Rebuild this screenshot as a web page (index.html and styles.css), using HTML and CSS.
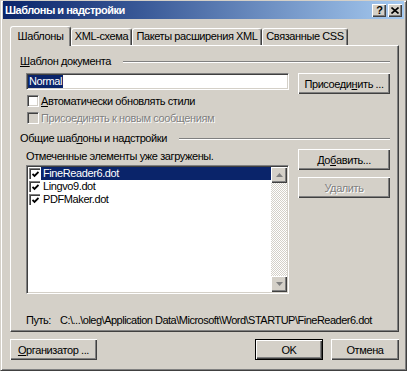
FILE: index.html
```html
<!DOCTYPE html>
<html lang="ru">
<head>
<meta charset="utf-8">
<title>Шаблоны и надстройки</title>
<link rel="stylesheet" href="styles.css">
</head>
<body>
<div class="window">
  <div class="titlebar">
    <span class="title">Шаблоны и надстройки</span>
    <div class="caption-btns">
      <span class="cbtn help">?</span>
      <span class="cbtn close"><svg width="8" height="7" viewBox="0 0 8 7"><path d="M0.5 0.5 L7.5 6.5 M7.5 0.5 L0.5 6.5" stroke="#000" stroke-width="1.6" fill="none"/></svg></span>
    </div>
  </div>
  <div class="body">
    <div class="tabs">
      <div class="tab active w1">Шаблоны</div>
      <div class="tab w2">XML-схема</div>
      <div class="tab w3">Пакеты расширения XML</div>
      <div class="tab w4">Связанные CSS</div>
    </div>
    <div class="panel">
      <div class="group-head"><span><u>Ш</u>аблон документа</span><i class="etch"></i></div>
      <div class="row1">
        <div class="field"><span class="sel">Normal</span></div>
        <div class="btn wide">Присоеди<u>н</u>ить ...</div>
      </div>
      <div class="chk first"><span class="box"></span><span class="lbl"><u>А</u>втоматически обновлять стили</span></div>
      <div class="chk second disabled"><span class="box"></span><span class="lbl">Присоединять к новым сообщениям</span></div>
      <div class="group-head g2"><span>Общие шаб<u>л</u>оны и надстройки</span><i class="etch"></i></div>
      <div class="section2">
        <div class="leftcol">
          <div class="note">Отмеченные элементы уже загружены.</div>
          <div class="listbox">
            <div class="items">
              <div class="item selected"><span class="lbox"><svg width="7" height="7" viewBox="0 0 7 7"><path d="M0.5 3 L2.5 5 L6.5 1" stroke="#000" stroke-width="1.8" fill="none"/></svg></span><span class="itext">FineReader6.dot</span></div>
              <div class="item"><span class="lbox"><svg width="7" height="7" viewBox="0 0 7 7"><path d="M0.5 3 L2.5 5 L6.5 1" stroke="#000" stroke-width="1.8" fill="none"/></svg></span><span class="itext">Lingvo9.dot</span></div>
              <div class="item"><span class="lbox"><svg width="7" height="7" viewBox="0 0 7 7"><path d="M0.5 3 L2.5 5 L6.5 1" stroke="#000" stroke-width="1.8" fill="none"/></svg></span><span class="itext">PDFMaker.dot</span></div>
            </div>
            <div class="scrollbar">
              <span class="sbtn"><svg width="7" height="4" viewBox="0 0 7 4"><path d="M3.5 0 L7 4 L0 4 Z" fill="#808080"/></svg></span>
              <span class="track"></span>
              <span class="sbtn"><svg width="7" height="4" viewBox="0 0 7 4"><path d="M0 0 L7 0 L3.5 4 Z" fill="#808080"/></svg></span>
            </div>
          </div>
        </div>
        <div class="rightcol">
          <div class="btn wide">До<u>б</u>авить...</div>
          <div class="btn wide disabled-btn">Удалить</div>
        </div>
      </div>
      <div class="path"><span class="plabel">Путь:</span><span class="pval">C:\...\oleg\Application Data\Microsoft\Word\STARTUP\FineReader6.dot</span></div>
    </div>
    <div class="footer">
      <div class="btn org"><u>О</u>рганизатор ...</div>
      <div class="btn small default">OK</div>
      <div class="btn small cancel">Отмена</div>
    </div>
  </div>
</div>
</body>
</html>
```

FILE: styles.css
```css
* { box-sizing: border-box; }
body {
  margin: 0;
  font-family: "Liberation Sans", Arial, sans-serif;
  font-size: 11px;
  letter-spacing: -0.4px;
  color: #000;
  background: #d4d0c8;
}
u { text-decoration: underline; text-underline-offset: 1px; }

.window {
  width: 407px;
  height: 371px;
  background: #d4d0c8;
  border: 1px solid;
  border-color: #d4d0c8 #404040 #404040 #d4d0c8;
  box-shadow: inset 1px 1px #fff, inset -1px -1px #808080;
  padding: 0 2px 2px 2px;
}

.titlebar {
  height: 18px;
  background: linear-gradient(90deg, #0a246a 0%, #3a5a98 35%, #a6caf0 100%);
  display: flex;
  align-items: center;
  justify-content: space-between;
  padding: 0 2px 0 2px;
  color: #fff;
}
.title {
  font-family: "Liberation Sans", Arial, sans-serif;
  font-weight: bold;
  font-size: 11px;
  letter-spacing: -0.5px;
}
.caption-btns { display: flex; gap: 2px; }
.cbtn {
  width: 14px;
  height: 13px;
  background: #d4d0c8;
  box-shadow: inset 1px 1px #fff, inset -1px -1px #404040, inset -2px -2px #808080;
  display: flex;
  align-items: center;
  justify-content: center;
  color: #000;
  font-size: 11px;
  font-weight: bold;
  line-height: 13px;
  letter-spacing: 0;
}
.cbtn.help { padding-left: 1px; padding-top: 1px; }

.body { padding: 0 3px 0 7px; }

.tabs {
  display: flex;
  align-items: flex-end;
  height: 19px;
  margin-top: 7px;
}
.tab {
  height: 17px;
  border-top: 1px solid #fff;
  border-left: 1px solid #fff;
  border-right: 1px solid #404040;
  box-shadow: inset -1px 0 #808080;
  border-radius: 3px 3px 0 0;
  background: #d4d0c8;
  text-align: center;
  line-height: 15px;
  white-space: nowrap;
}
.tab.active {
  height: 20px;
  margin-bottom: -1px;
  position: relative;
  z-index: 1;
  line-height: 18px;
}
.w1 { width: 61px; }
.w2 { width: 61px; }
.w3 { width: 130px; }
.w4 { width: 86px; }

.panel {
  width: 389px;
  height: 287px;
  border: 1px solid;
  border-color: #fff #404040 #404040 #fff;
  box-shadow: inset -1px -1px #808080;
  padding: 0 8px 0 9px;
  display: flex;
  flex-direction: column;
}

.group-head {
  display: flex;
  align-items: center;
  height: 13px;
  margin-top: 9px;
  line-height: 13px;
  white-space: nowrap;
}
.group-head.g2 { margin-top: 8px; }
.etch {
  flex: 1;
  height: 2px;
  margin-left: 12px;
  border-top: 1px solid #808080;
  border-bottom: 1px solid #fff;
}

.row1 {
  display: flex;
  align-items: flex-start;
  margin-top: 5px;
  margin-left: 6px;
  height: 21px;
}
.field {
  width: 263px;
  height: 17px;
  background: #fff;
  border: 1px solid;
  border-color: #808080 #fff #fff #808080;
  box-shadow: inset 1px 1px #404040, inset -1px -1px #d4d0c8;
  padding: 1px;
  display: flex;
  align-items: center;
}
.sel {
  background: #0a246a;
  color: #fff;
  height: 13px;
  line-height: 13px;
  padding: 0 1px;
}

.btn {
  height: 21px;
  background: #d4d0c8;
  box-shadow: inset 1px 1px #fff, inset -1px -1px #404040, inset -2px -2px #808080;
  display: flex;
  align-items: center;
  justify-content: center;
  white-space: nowrap;
}
.btn.wide { width: 92px; }
.row1 .btn { margin-left: 9px; }

.chk {
  display: flex;
  align-items: center;
  height: 12px;
  margin-left: 7px;
  line-height: 12px;
  white-space: nowrap;
}
.chk.first { margin-top: 1px; }
.chk.second { margin-top: 5px; }
.box {
  width: 12px;
  height: 12px;
  background: #fff;
  border: 1px solid;
  border-color: #808080 #fff #fff #808080;
  box-shadow: inset 1px 1px #404040, inset -1px -1px #d4d0c8;
  margin-right: 2px;
  flex: none;
}
.disabled .box { background: #d4d0c8; }
.disabled .lbl, .disabled-btn {
  color: #808080;
  text-shadow: 1px 1px #fff;
}

.section2 { display: flex; }
.leftcol { margin-left: 6px; width: 263px; display: flex; flex-direction: column; }
.note { margin-top: 5px; height: 13px; line-height: 13px; white-space: nowrap; }
.listbox {
  margin-top: 2px;
  height: 129px;
  background: #fff;
  border: 1px solid;
  border-color: #808080 #fff #fff #808080;
  box-shadow: inset 1px 1px #404040, inset -1px -1px #d4d0c8;
  padding: 1px;
  display: flex;
}
.items { flex: 1; display: flex; flex-direction: column; }
.item {
  height: 13px;
  display: flex;
  align-items: center;
  padding-left: 1px;
}
.lbox {
  width: 11px;
  height: 11px;
  border-top: 1px solid #808080;
  border-left: 1px solid #808080;
  box-shadow: inset 1px 1px #404040;
  background: #fff;
  display: flex;
  align-items: center;
  justify-content: center;
  padding: 1px 0 0 1px;
  flex: none;
}
.itext {
  flex: 1;
  height: 13px;
  line-height: 13px;
  padding-left: 2px;
  margin-left: 1px;
  white-space: nowrap;
}
.selected .itext { background: #0a246a; color: #fff; }

.scrollbar {
  width: 16px;
  display: flex;
  flex-direction: column;
}
.sbtn {
  width: 16px;
  height: 16px;
  background: #d4d0c8;
  box-shadow: inset 1px 1px #fff, inset -1px -1px #404040, inset -2px -2px #808080;
  display: flex;
  align-items: center;
  justify-content: center;
  flex: none;
}
.track {
  flex: 1;
  background: repeating-conic-gradient(#fff 0 25%, #d4d0c8 0 50%) 0 0 / 2px 2px;
}

.rightcol { margin-left: 9px; display: flex; flex-direction: column; }
.rightcol .btn { margin-top: 4px; }
.rightcol .btn + .btn { margin-top: 7px; }

.path {
  margin-top: 20px;
  margin-left: 6px;
  height: 13px;
  line-height: 13px;
  white-space: nowrap;
  width: 364px;
  letter-spacing: -0.5px;
  display: flex;
}
.plabel { width: 34px; flex: none; }

.footer {
  display: flex;
  margin-top: 7px;
  width: 389px;
}
.btn.org { width: 87px; }
.btn.small { width: 68px; }
.btn.default {
  margin-left: auto;
  border: 1px solid #000;
  box-shadow: inset 1px 1px #fff, inset -1px -1px #404040, inset -2px -2px #808080;
}
.btn.cancel { margin-left: 8px; }
```
